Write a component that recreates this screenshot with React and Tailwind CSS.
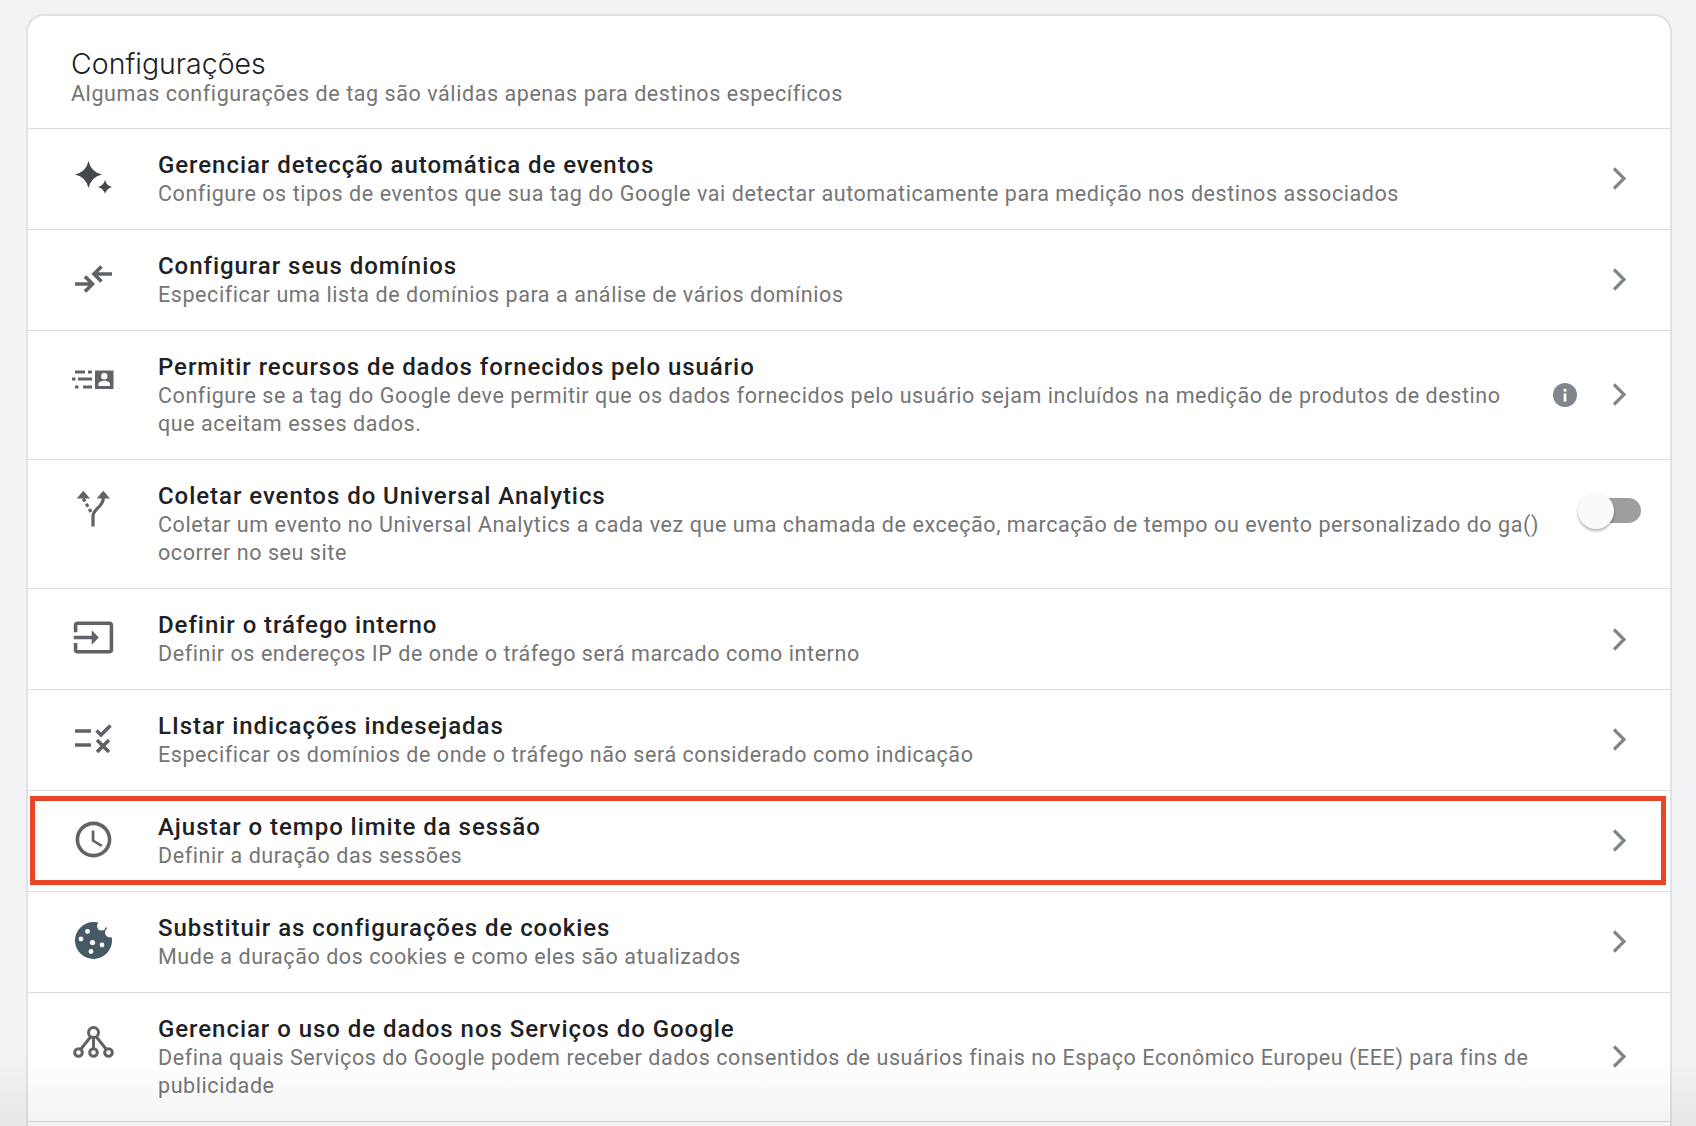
import React from "react";

const G = "#5f6368";

const Sparkle = () => (
  <svg width="43" height="43" viewBox="0 0 43 43" fill="#45484c">
    <path d="M16.5 5 Q19 16 30 18.5 Q19 21 16.5 32 Q14 21 3 18.5 Q14 16 16.5 5Z" />
    <path d="M33 24 Q34.5 29.5 40 31 Q34.5 32.5 33 38 Q31.5 32.5 26 31 Q31.5 29.5 33 24Z" />
  </svg>
);
const Arrows = () => (
  <svg width="43" height="43" viewBox="0 0 43 43" fill="none" stroke={G} strokeWidth="3.6">
    <path d="M3 27H20M13 19.5l7.5 7.5-7.5 7.5" />
    <path d="M40 17H22M29.5 9.5L22 17l7.5 7.5" />
  </svg>
);
const Material = ({ d, fill = G }) => (
  <svg width="43" height="43" viewBox="0 0 24 24" fill={fill}>
    <path d={d} />
  </svg>
);
const DataIcon = () => (
  <svg width="43" height="43" viewBox="0 0 43 43" fill={G}>
    <rect x="3" y="12.5" width="10" height="3" />
    <rect x="16" y="12.5" width="4" height="3" />
    <rect x="0" y="19.5" width="3.5" height="3" />
    <rect x="6" y="19.5" width="14" height="3" />
    <rect x="3" y="27.5" width="3.5" height="3" />
    <rect x="11" y="27.5" width="9" height="3" />
    <path fillRule="evenodd" d="M23 12.5h18.500v18.500H23zM32.300 15a3.200 3.200 0 1 0 0 6.400 3.200 3.200 0 0 0 0-6.400zM26.500 28h11.500v-2.200c0-2-3.600-3-5.750-3s-5.750 1-5.750 3z" />
  </svg>
);
const BranchIcon = () => (
  <svg width="43" height="43" viewBox="0 0 43 43" fill="none" stroke={G} strokeWidth="3.2">
    <path d="M21 39.500V29C21 22 31.300 20 31.300 11" />
    <path d="M11.300 11.500L19 25" strokeDasharray="3.500 2.500" />
    <path d="M4.700 11.500L11.300 3.700 18 11.500z" fill={G} stroke="none" />
    <path d="M24.700 11.500L31.300 3.700 38 11.500z" fill={G} stroke="none" />
  </svg>
);
const RuleIcon = () => (
  <svg width="43" height="43" viewBox="0 0 43 43" fill="none" stroke={G} strokeWidth="3.600">
    <path d="M3 14H19M3 28H19" />
    <path d="M24.500 13.500l4.500 4.500 9.500-9.500" />
    <path d="M25 23l12 12M37 23L25 35" />
  </svg>
);
const Cookie = () => (
  <svg width="43" height="43" viewBox="0 0 43 43">
    <circle cx="21.5" cy="21.5" r="18.5" fill="#455a64" />
    <circle cx="29.5" cy="7" r="4.5" fill="#fff" />
    <circle cx="38" cy="13.5" r="5" fill="#fff" />
    <g fill="#fff">
      <circle cx="15.5" cy="12.5" r="2.4" />
      <circle cx="9" cy="20" r="2.4" />
      <circle cx="20.5" cy="23.5" r="2.6" />
      <circle cx="30" cy="26" r="2.4" />
      <circle cx="19" cy="32.5" r="2.4" />
    </g>
  </svg>
);
const Tree = () => (
  <svg width="43" height="43" viewBox="0 0 43 43" fill="none" stroke={G} strokeWidth="3">
    <circle cx="21.5" cy="12.5" r="5" />
    <circle cx="6.5" cy="32.5" r="3.8" />
    <circle cx="21.5" cy="32.5" r="3.8" />
    <circle cx="36.5" cy="32.5" r="3.8" />
    <path d="M18.500 17L9 29M21.500 18V28.500M24.500 17L34 29" />
  </svg>
);

const Chevron = () => (
  <svg width="15" height="23" viewBox="0 0 15 23" fill="none" stroke="#80868b" strokeWidth="3.2" className="shrink-0">
    <path d="M2 1.5l10 10-10 10" />
  </svg>
);
const Info = () => (
  <svg width="24" height="24" viewBox="0 0 24 24" className="shrink-0">
    <circle cx="12" cy="12" r="12" fill="#80868b" />
    <rect x="10.6" y="10.5" width="2.8" height="8" fill="#fff" />
    <rect x="10.6" y="5.8" width="2.8" height="2.8" fill="#fff" />
  </svg>
);
const Toggle = () => (
  <div className="relative mt-[4px] h-[36px] w-[63px] shrink-0">
    <div className="absolute left-[6px] right-0 top-[5px] h-[25px] rounded-full bg-[#9e9e9e]" />
    <div className="absolute left-0 top-0 h-[36px] w-[36px] rounded-full bg-[#fafafa] shadow-[0_2px_3px_rgba(0,0,0,0.3)]" />
  </div>
);

const rows = [
  {
    icon: <Sparkle />,
    title: "Gerenciar detecção automática de eventos",
    desc: "Configure os tipos de eventos que sua tag do Google vai detectar automaticamente para medição nos destinos associados",
  },
  {
    icon: <Arrows />,
    title: "Configurar seus domínios",
    desc: "Especificar uma lista de domínios para a análise de vários domínios",
  },
  {
    icon: <DataIcon />,
    title: "Permitir recursos de dados fornecidos pelo usuário",
    desc: "Configure se a tag do Google deve permitir que os dados fornecidos pelo usuário sejam incluídos na medição de produtos de destino\nque aceitam esses dados.",
    info: true,
  },
  {
    icon: <BranchIcon />,
    title: "Coletar eventos do Universal Analytics",
    desc: "Coletar um evento no Universal Analytics a cada vez que uma chamada de exceção, marcação de tempo ou evento personalizado do ga()\nocorrer no seu site",
    toggle: true,
  },
  {
    icon: <Material d="M21 3.01H3c-1.1 0-2 .9-2 2V9h2V4.99h18v14.03H3V15H1v4.01c0 1.1.9 1.98 2 1.98h18c1.1 0 2-.88 2-1.98v-14c0-1.11-.9-2-2-2zM11 16l4-4-4-4v3H1v2h10v3z" />,
    title: "Definir o tráfego interno",
    desc: "Definir os endereços IP de onde o tráfego será marcado como interno",
  },
  {
    icon: <RuleIcon />,
    title: "LIstar indicações indesejadas",
    desc: "Especificar os domínios de onde o tráfego não será considerado como indicação",
  },
  {
    icon: <Material d="M11.99 2C6.47 2 2 6.48 2 12s4.47 10 9.99 10C17.52 22 22 17.52 22 12S17.52 2 11.99 2zM12 20c-4.42 0-8-3.58-8-8s3.58-8 8-8 8 3.58 8 8-3.58 8-8 8zm.5-13H11v6l5.25 3.15.75-1.23-4.5-2.67z" />,
    title: "Ajustar o tempo limite da sessão",
    desc: "Definir a duração das sessões",
    highlight: true,
  },
  {
    icon: <Cookie />,
    title: "Substituir as configurações de cookies",
    desc: "Mude a duração dos cookies e como eles são atualizados",
  },
  {
    icon: <Tree />,
    title: "Gerenciar o uso de dados nos Serviços do Google",
    desc: "Defina quais Serviços do Google podem receber dados consentidos de usuários finais no Espaço Econômico Europeu (EEE) para fins de\npublicidade",
  },
];

function Row({ icon, title, desc, info, toggle, highlight }) {
  return (
    <div className="relative flex border-t border-[#dadce0] pl-[44px] pr-[43px]">
      {highlight && (
        <div className="pointer-events-none absolute bottom-[6px] left-[2px] right-[4px] top-[5px] border-[5px] border-[#ea4527]" />
      )}
      <div className="w-[86px] shrink-0 pt-[27px]">{icon}</div>
      <div className="min-w-0 flex-1 whitespace-pre-line py-[20.8px]">
        <div className="text-[24px] leading-[30px] font-medium tracking-[0.95px] text-[#202124]">{title}</div>
        <div className="text-[21.5px] leading-[28.3px] tracking-[0.57px] text-[#757575]">{desc}</div>
      </div>
      {toggle ? (
        <div className="-mr-[14px] pt-[29px]">
          <Toggle />
        </div>
      ) : (
        <div className="flex items-center gap-[35px]">
          {info && <Info />}
          <Chevron />
        </div>
      )}
    </div>
  );
}

export default function App() {
  return (
    <div className="relative h-[1126px] overflow-hidden bg-[#f1f3f5] pl-[26px] pr-[24px] pt-[14px] font-['Roboto',sans-serif]">
      <div className="rounded-t-[18px] border-2 border-b-0 border-[#dfe1e5] bg-white">
        <div className="flex h-[112px] flex-col justify-start px-[43px] pt-[30px]">
          <div className="font-['Inter',sans-serif] text-[28.5px] leading-[36px] font-light text-[#202124]">Configurações</div>
          <div className="text-[21.5px] leading-[24px] tracking-[0.57px] text-[#757575]">
            Algumas configurações de tag são válidas apenas para destinos específicos
          </div>
        </div>
        {rows.map((r) => (
          <Row key={r.title} {...r} />
        ))}
        <div className="h-[40px] border-t border-[#dadce0]" />
      </div>
      <div className="pointer-events-none absolute inset-x-0 bottom-0 h-[66px] bg-gradient-to-b from-transparent to-black/5" />
    </div>
  );
}
